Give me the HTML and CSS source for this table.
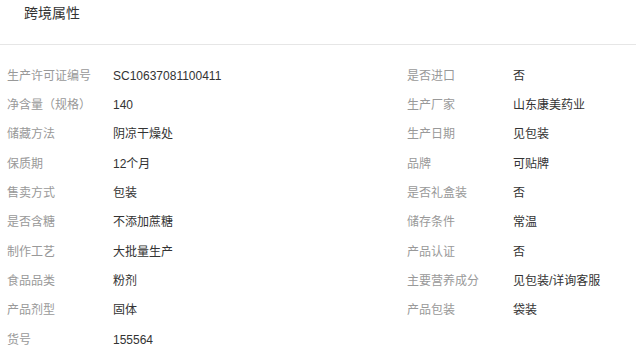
FILE: index.html
```html
<!DOCTYPE html>
<html lang="zh-CN">
<head>
<meta charset="utf-8">
<title>跨境属性</title>
<link rel="stylesheet" href="styles.css">
</head>
<body>
<section class="attrs">
  <header class="attrs-head">
    <h2 class="attrs-title">跨境属性</h2>
  </header>
  <dl class="attrs-grid">
    <div class="attr"><dt>生产许可证编号</dt><dd>SC10637081100411</dd></div>
    <div class="attr"><dt>是否进口</dt><dd>否</dd></div>
    <div class="attr"><dt>净含量（规格）</dt><dd>140</dd></div>
    <div class="attr"><dt>生产厂家</dt><dd>山东康美药业</dd></div>
    <div class="attr"><dt>储藏方法</dt><dd>阴凉干燥处</dd></div>
    <div class="attr"><dt>生产日期</dt><dd>见包装</dd></div>
    <div class="attr"><dt>保质期</dt><dd>12个月</dd></div>
    <div class="attr"><dt>品牌</dt><dd>可贴牌</dd></div>
    <div class="attr"><dt>售卖方式</dt><dd>包装</dd></div>
    <div class="attr"><dt>是否礼盒装</dt><dd>否</dd></div>
    <div class="attr"><dt>是否含糖</dt><dd>不添加蔗糖</dd></div>
    <div class="attr"><dt>储存条件</dt><dd>常温</dd></div>
    <div class="attr"><dt>制作工艺</dt><dd>大批量生产</dd></div>
    <div class="attr"><dt>产品认证</dt><dd>否</dd></div>
    <div class="attr"><dt>食品品类</dt><dd>粉剂</dd></div>
    <div class="attr"><dt>主要营养成分</dt><dd>见包装/详询客服</dd></div>
    <div class="attr"><dt>产品剂型</dt><dd>固体</dd></div>
    <div class="attr"><dt>产品包装</dt><dd>袋装</dd></div>
    <div class="attr"><dt>货号</dt><dd>155564</dd></div>
  </dl>
</section>
</body>
</html>
```
FILE: styles.css
```css
html, body {
  margin: 0;
  padding: 0;
  background: #fff;
}

body {
  font-family: "Liberation Sans", "Noto Sans CJK SC", sans-serif;
  color: #333;
}

.attrs-head {
  height: 45px;
  border-bottom: 1px solid #e6e6e6;
  padding-left: 24px;
  box-sizing: border-box;
}

.attrs-title {
  margin: 0;
  padding-top: 4px;
  font-size: 14px;
  font-weight: normal;
  line-height: 18px;
  color: #333;
}

.attrs-grid {
  margin: 0;
  padding: 16px 0 0 7px;
  display: grid;
  grid-template-columns: 400px 1fr;
  grid-auto-rows: 29.33px;
}

.attr {
  display: flex;
  align-items: center;
  font-size: 12px;
  line-height: 16px;
}

.attr dt {
  width: 106px;
  flex: none;
  color: #999;
}

.attr dd {
  margin: 0;
  color: #333;
}
```
